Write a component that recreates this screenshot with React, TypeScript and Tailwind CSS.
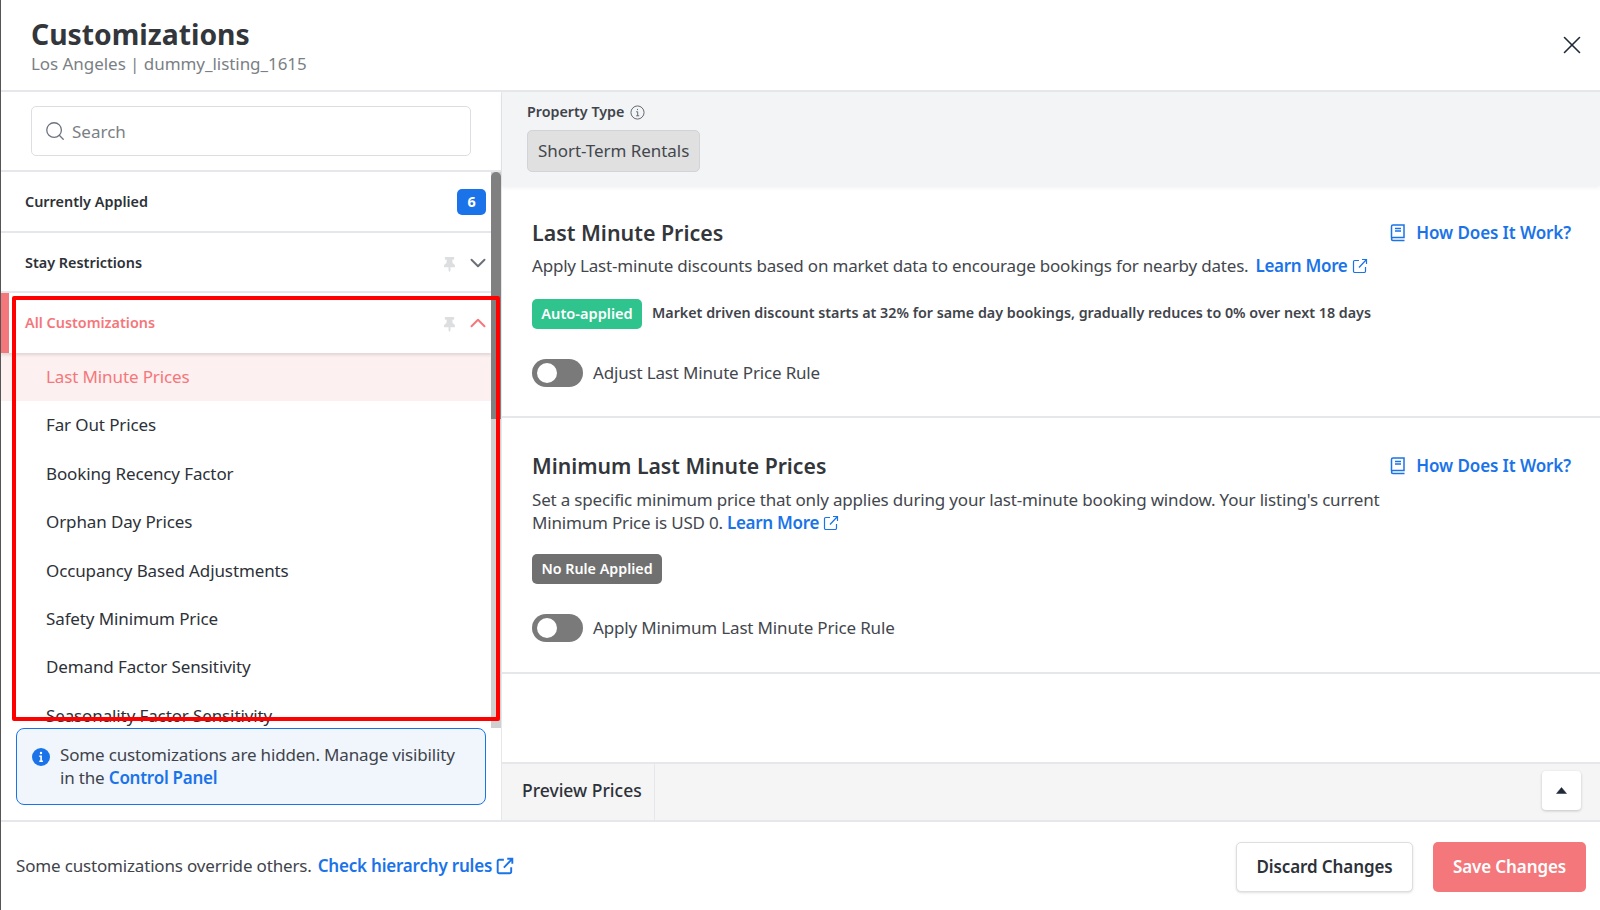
import { ChevronDown, ChevronUp, Search, X } from "lucide-react";
import { FaThumbtack } from "react-icons/fa";

const items = [
  "Last Minute Prices",
  "Far Out Prices",
  "Booking Recency Factor",
  "Orphan Day Prices",
  "Occupancy Based Adjustments",
  "Safety Minimum Price",
  "Demand Factor Sensitivity",
  "Seasonality Factor Sensitivity",
];

const ExternalIcon = ({ className, weight = 1.2 }: { className?: string; weight?: number }) => (
  <svg viewBox="0 0 16 16" fill="none" stroke="currentColor" strokeWidth={weight} className={className}>
    <path d="M7 2.5H2.8a1.3 1.3 0 0 0-1.3 1.3v9.4a1.3 1.3 0 0 0 1.3 1.3h9.4a1.3 1.3 0 0 0 1.3-1.3V9" />
    <path d="M7 9.5 14.5 1.5M10 1.5h4.5V6" />
  </svg>
);

const BookIcon = () => (
  <svg viewBox="0 0 16 18" fill="none" stroke="currentColor" strokeWidth="1.5" className="h-[18px] w-4">
    <path d="M1.5 14V2.5a1.5 1.5 0 0 1 1.5-1.5h11v12.5H3a1.5 1.5 0 0 0-1.5 1.5v0A1.5 1.5 0 0 0 3 16.5h11.5" />
    <path d="M5 4.5h6M5 7h6" strokeWidth="1.6" />
  </svg>
);

const Toggle = () => (
  <div className="flex h-7 w-[51px] shrink-0 items-center rounded-full bg-[#7a7a7a] pl-[5px]">
    <div className="size-5 rounded-full bg-white" />
  </div>
);

const HowItWorks = () => (
  <a className="flex items-center gap-[10px] text-[17px] font-semibold tracking-[-0.1px] text-[#1a73e8]">
    <BookIcon />
    How Does It Work?
  </a>
);

const LearnMore = () => (
  <a className="inline-flex items-center gap-1 font-semibold tracking-[-0.3px] text-[#1a73e8]">
    Learn More
    <ExternalIcon className="size-[16px]" />
  </a>
);

export default function App() {
  return (
    <div className="relative flex h-[910px] w-[1600px] flex-col overflow-hidden border-l border-[#555] bg-white font-['Noto_Sans',sans-serif] text-[17px] tracking-[-0.17px] text-[#2d3138]">
      <header className="flex h-[92px] shrink-0 items-center justify-between border-b-2 border-[#e5e7eb] pl-[30px] pr-[13px]">
        <div className="pt-[2px]">
          <h1 className="text-[28.3px] leading-[34px] font-bold tracking-normal text-[#33363b]">Customizations</h1>
          <p className="leading-[25px] tracking-[-0.05px] text-[#7b7f85]">Los Angeles | dummy_listing_1615</p>
        </div>
        <X className="size-[30px] text-[#1f2937]" strokeWidth={1.3} />
      </header>

      <div className="flex min-h-0 flex-1">
        <aside className="flex w-[501px] shrink-0 flex-col border-r border-[#e5e7eb]">
          <div className="flex h-[80px] shrink-0 items-center border-b-2 border-[#e5e7eb] px-[30px]">
            <div className="flex h-[50px] w-full items-center gap-[6px] rounded-[5px] border border-[#dcdee1] pl-[12px]">
              <Search className="size-[22px] text-[#6b7280]" strokeWidth={1.4} />
              <span className="pt-[1px] tracking-[0px] text-[#7b7f85]">Search</span>
            </div>
          </div>

          <div className="flex min-h-0 flex-1">
            <div className="min-w-0 flex-1 overflow-hidden">
              <div className="flex h-[60.5px] items-center justify-between border-b-2 border-[#e5e7eb] pl-[24px] pr-[5px] pt-[2px] text-[14.4px] font-semibold tracking-normal">
                <span>Currently Applied</span>
                <span className="flex h-[26px] w-[29px] items-center justify-center rounded-[5px] bg-[#1a73e8] font-bold text-white">6</span>
              </div>
              <div className="flex h-[60.5px] items-center justify-between border-b-2 border-[#e5e7eb] pl-[24px] pt-[2px] text-[14.4px] font-semibold tracking-normal">
                <span>Stay Restrictions</span>
                <span className="flex items-center gap-[8px]">
                  <FaThumbtack className="mt-[4px] size-[15px] text-[#dcdee0]" />
                  <ChevronDown className="size-[26px] text-[#6b6f76]" strokeWidth={1.8} />
                </span>
              </div>
              <div className="relative z-10 flex h-[59.6px] items-center justify-between border-l-[8px] border-[#f4777b] bg-white pl-[16px] text-[14.4px] font-semibold tracking-normal text-[#f4777b] shadow-[0_2px_3px_rgba(0,0,0,0.12)]">
                <span>All Customizations</span>
                <span className="flex items-center gap-[8px]">
                  <FaThumbtack className="mt-[4px] size-[15px] text-[#dcdee0]" />
                  <ChevronUp className="size-[26px] text-[#f4777b]" strokeWidth={1.8} />
                </span>
              </div>
              {items.map((item, i) => (
                <div
                  key={item}
                  className={`flex h-[48.4px] items-center pl-[45px] tracking-[-0.12px] ${i === 0 ? "bg-[#fdf0f0] text-[#f4777b]" : "text-[#2d3138]"}`}
                >
                  {item}
                </div>
              ))}
            </div>
            <div className="w-[10px] shrink-0 bg-[#d0d0d0]">
              <div className="h-[247px] rounded-t-[5px] bg-[#808080]" />
            </div>
          </div>

          <div className="h-[92px] shrink-0 pl-[15px]">
            <div className="flex h-[77px] w-[470px] items-start gap-[10px] rounded-[8px] border border-[#1a73e8] bg-[#f1f6fd] pl-[15px] pt-[14px]">
              <svg viewBox="0 0 18 18" className="mt-[5px] size-[18px] shrink-0">
                <circle cx="9" cy="9" r="9" fill="#1a73e8" />
                <path d="M9 3.8a1.2 1.2 0 1 1 0 2.4 1.2 1.2 0 0 1 0-2.4ZM7.3 7.6h2.6v5h1v1.4H7.3v-1.4h1v-3.6h-1Z" fill="#fff" />
              </svg>
              <p className="leading-[23px] text-[#3f444b]">
                Some customizations are hidden. Manage visibility
                <br />
                in the <a className="font-semibold tracking-[-0.25px] text-[#1a73e8]">Control Panel</a>
              </p>
            </div>
          </div>
        </aside>

        <main className="flex min-w-0 flex-1 flex-col">
          <div className="relative z-10 h-[94px] shrink-0 bg-[#f3f4f6] pl-[25px] pt-[9px] shadow-[0_2px_4px_rgba(0,0,0,0.06)]">
            <div className="flex items-center gap-[6px] text-[14.3px] leading-[22px] font-semibold tracking-normal text-[#3f444b]">
              Property Type
              <svg viewBox="0 0 16 16" fill="none" stroke="#5b6068" className="size-[15px]">
                <circle cx="8" cy="8" r="7" />
                <path d="M8 4.2v1.2M6.6 7.2H8.2v4.2M6.6 11.5h3.2" />
              </svg>
            </div>
            <div className="mt-[7px] inline-flex h-[42px] items-center rounded-[5px] border border-[#d1d3d6] bg-[#e0e0e0] px-[10px] tracking-[-0.05px] text-[#43474d]">
              Short-Term Rentals
            </div>
          </div>

          <section className="h-[232px] shrink-0 border-b-2 border-[#e5e7eb] pl-[30px] pr-[29px] pt-[32px]">
            <div className="flex items-center justify-between">
              <h2 className="text-[21.4px] leading-[30px] font-semibold tracking-normal text-[#33363b]">Last Minute Prices</h2>
              <HowItWorks />
            </div>
            <p className="mt-[6px] flex gap-[7px] leading-[24px] tracking-[-0.2px] text-[#43474d]">
              Apply Last-minute discounts based on market data to encourage bookings for nearby dates.
              <LearnMore />
            </p>
            <div className="mt-[21px] flex items-center gap-[10px]">
              <span className="flex h-[30px] w-[110px] items-center justify-center rounded-[5px] bg-[#2fc48d] text-[14.6px] font-semibold tracking-normal text-white">Auto-applied</span>
              <span className="pb-[2px] text-[14.3px] font-semibold tracking-normal text-[#3f444b]">Market driven discount starts at 32% for same day bookings, gradually reduces to 0% over next 18 days</span>
            </div>
            <div className="mt-[30px] flex items-center gap-[10px]">
              <Toggle />
              <span className="text-[#43474d]">Adjust Last Minute Price Rule</span>
            </div>
          </section>

          <section className="h-[256px] shrink-0 border-b-2 border-[#e5e7eb] pl-[30px] pr-[29px] pt-[33px]">
            <div className="flex items-center justify-between">
              <h2 className="text-[21.2px] leading-[30px] font-semibold tracking-normal text-[#33363b]">Minimum Last Minute Prices</h2>
              <HowItWorks />
            </div>
            <div className="mt-[7px] leading-[23px] tracking-[-0.18px] text-[#43474d]">
              <p>Set a specific minimum price that only applies during your last-minute booking window. Your listing's current</p>
              <p className="flex gap-[4px]">
                Minimum Price is USD 0.
                <LearnMore />
              </p>
            </div>
            <span className="mt-[20px] flex h-[30px] w-[130px] items-center justify-center rounded-[5px] bg-[#707070] text-[14.3px] font-semibold tracking-normal text-white">No Rule Applied</span>
            <div className="mt-[30px] flex items-center gap-[10px]">
              <Toggle />
              <span className="text-[#43474d]">Apply Minimum Last Minute Price Rule</span>
            </div>
          </section>

          <div className="min-h-0 flex-1" />

          <div className="flex h-[58px] shrink-0 items-stretch justify-between border-t-2 border-[#e5e7eb] bg-[#f5f5f5]">
            <div className="flex items-center border-r border-[#e5e7eb] pb-[3px] pl-[20px] pr-[12px] text-[17.5px] font-medium tracking-normal text-[#2d3138]">Preview Prices</div>
            <div className="flex items-center pb-[3px] pr-[19px]">
              <button className="flex size-[39px] items-center justify-center rounded-[4px] bg-white shadow-[0_1px_3px_rgba(0,0,0,0.2)]">
                <svg viewBox="0 0 11 7" className="h-[7px] w-[11px]"><path d="M5.5 0.5 10.5 6.5H0.5Z" fill="#1f2937" stroke="#1f2937" strokeLinejoin="round" strokeWidth="0.5" /></svg>
              </button>
            </div>
          </div>
        </main>
      </div>

      <footer className="flex h-[90px] shrink-0 items-center justify-between border-t-2 border-[#e5e7eb] pl-[15px] pr-[14px]">
        <p className="flex items-center gap-[6px] text-[#3f444b]">
          Some customizations override others.
          <a className="flex items-center gap-1 font-semibold tracking-[-0.2px] text-[#1a73e8]">
            Check hierarchy rules
            <ExternalIcon className="size-[18px]" weight={1.7} />
          </a>
        </p>
        <div className="mt-[2px] flex gap-[20px]">
          <button className="h-[50px] w-[177px] rounded-[5px] border border-[#dcdee1] bg-white font-semibold tracking-[-0.1px] text-[#2d3138] shadow-sm">Discard Changes</button>
          <button className="h-[50px] w-[153px] rounded-[5px] bg-[#f4777b] font-semibold tracking-[-0.1px] text-white">Save Changes</button>
        </div>
      </footer>

      {/* red annotation box drawn over the screenshot */}
      <div className="pointer-events-none absolute left-[11px] top-[296px] z-20 h-[425px] w-[488px] rounded-[2px] border-4 border-[#ff0000]" />
    </div>
  );
}
